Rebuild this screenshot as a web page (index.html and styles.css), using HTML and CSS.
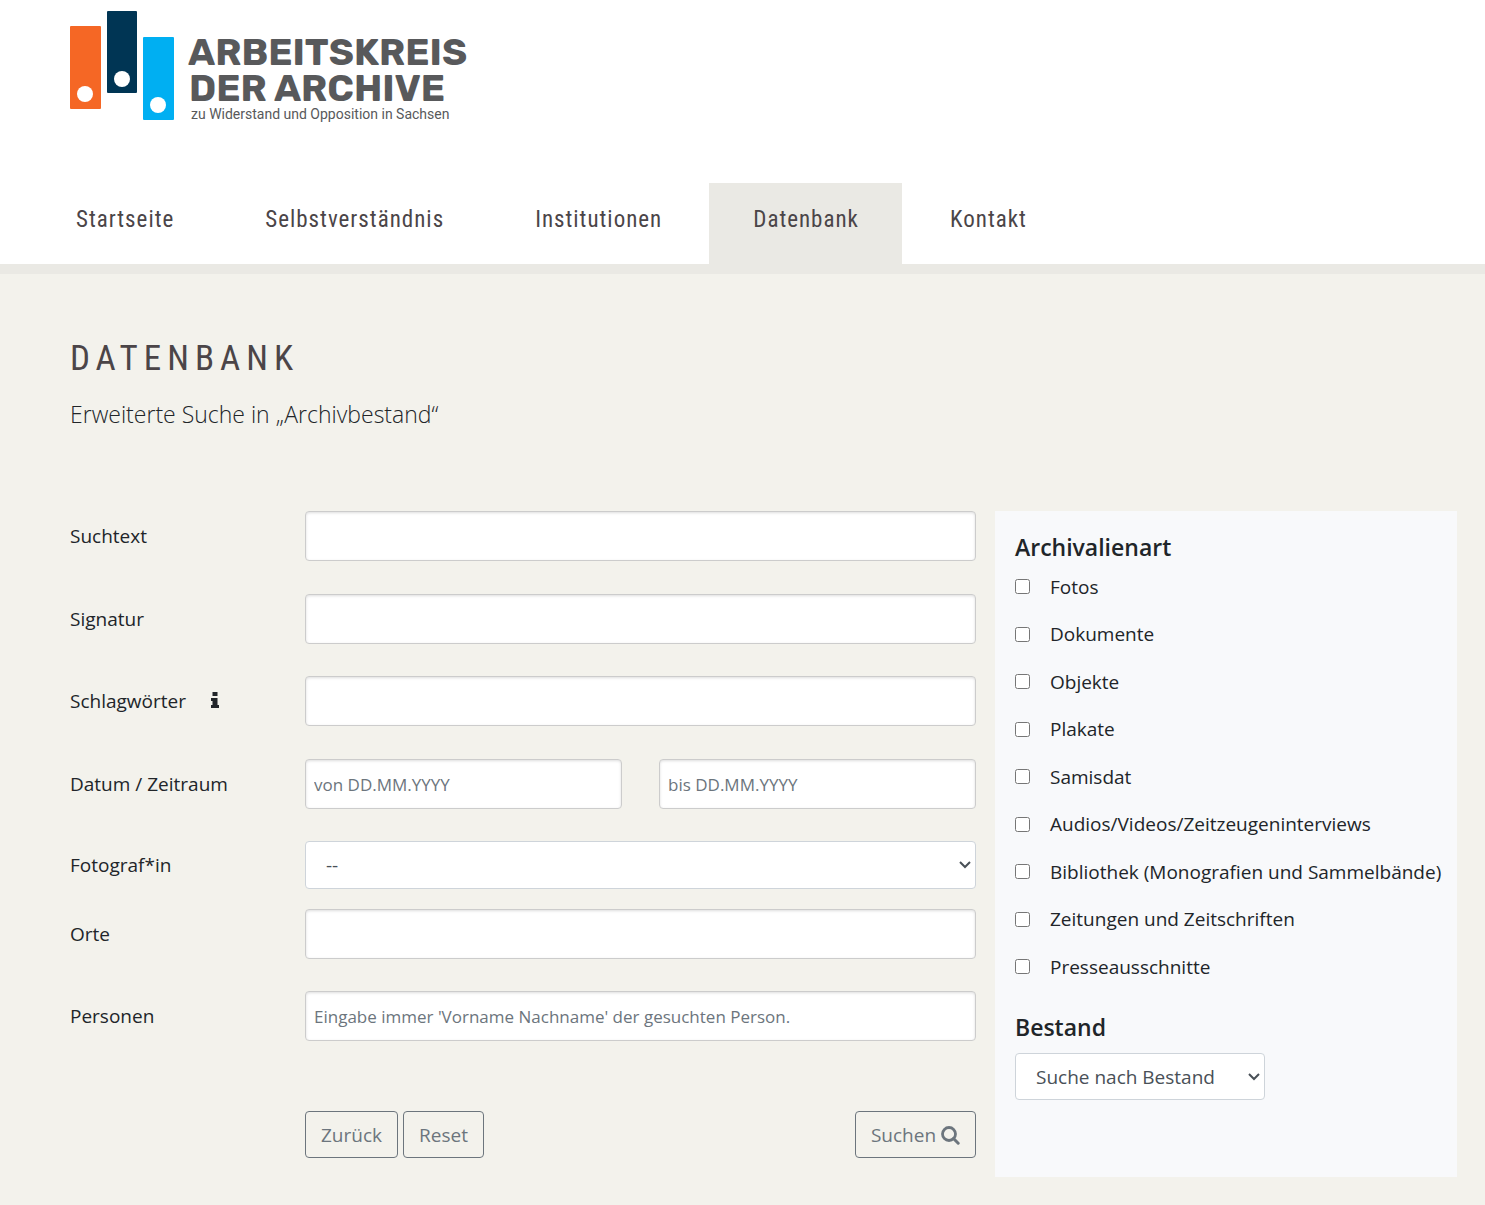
FILE: index.html
```html
<!DOCTYPE html>
<html lang="de">
<head>
<meta charset="utf-8">
<meta name="viewport" content="width=device-width, initial-scale=1">
<title>Datenbank – Arbeitskreis der Archive</title>
<link rel="stylesheet" href="styles.css">
</head>
<body>
<header class="site-header">
  <a class="logo" href="#">
    <svg width="404" height="116" viewBox="0 0 404 116" role="img" aria-label="Arbeitskreis der Archive">
      <rect x="0" y="16" width="31" height="83" rx="1" fill="#f56725"/>
      <circle cx="15" cy="84" r="8" fill="#fff"/>
      <rect x="37" y="1" width="30" height="82" rx="1" fill="#003554"/>
      <circle cx="52" cy="69" r="8" fill="#fff"/>
      <rect x="73" y="27" width="31" height="83" rx="1" fill="#00aff2"/>
      <circle cx="88" cy="95" r="8" fill="#fff"/>
      <text class="logo-name" x="118" y="55">ARBEITSKREIS</text>
      <text class="logo-name" x="119" y="91">DER ARCHIVE</text>
      <text class="logo-sub" x="121" y="109">zu Widerstand und Opposition in Sachsen</text>
    </svg>
  </a>
  <nav class="main-nav">
    <a href="#">Startseite</a>
    <a href="#">Selbstverständnis</a>
    <a href="#">Institutionen</a>
    <a href="#" class="active" aria-current="page">Datenbank</a>
    <a href="#">Kontakt</a>
  </nav>
</header>
<main class="content">
  <h1>DATENBANK</h1>
  <p class="lead">Erweiterte Suche in „Archivbestand“</p>
  <form class="search">
    <div class="fields">
      <div class="row"><label for="text">Suchtext</label><input class="control" type="text" id="text"></div>
      <div class="row"><label for="signatur">Signatur</label><input class="control" type="text" id="signatur"></div>
      <div class="row">
        <label for="tags">Schlagwörter
          <svg class="info" width="8" height="16" viewBox="0 0 8 16" aria-hidden="true"><path fill="currentColor" d="M1.500 0h5v4h-5zM0 6h6.500v7H8v3H0v-3h1.500V9H0z"/></svg>
        </label>
        <input class="control" type="text" id="tags">
      </div>
      <div class="row">
        <label for="from">Datum / Zeitraum</label>
        <div class="range">
          <input class="control" type="text" id="from" placeholder="von DD.MM.YYYY">
          <input class="control" type="text" aria-label="Datum bis" placeholder="bis DD.MM.YYYY">
        </div>
      </div>
      <div class="row compact"><label for="photographer">Fotograf*in</label><select class="select" id="photographer"><option>--</option></select></div>
      <div class="row"><label for="places">Orte</label><input class="control" type="text" id="places"></div>
      <div class="row"><label for="people">Personen</label><input class="control" type="text" id="people" placeholder="Eingabe immer 'Vorname Nachname' der gesuchten Person."></div>
      <div class="actions">
        <button class="btn" type="button">Zurück</button>
        <button class="btn" type="reset">Reset</button>
        <button class="btn submit" type="submit">Suchen
          <svg width="19" height="19" viewBox="0 0 19 19" aria-hidden="true"><circle cx="8" cy="8" r="6.500" fill="none" stroke="currentColor" stroke-width="2.800"/><path d="M12.500 12.500l4.700 4.700" stroke="currentColor" stroke-width="3" stroke-linecap="round"/></svg>
        </button>
      </div>
    </div>
    <aside class="filters">
      <h2>Archivalienart</h2>
      <ul class="types">
        <li><label><input type="checkbox">Fotos</label></li>
        <li><label><input type="checkbox">Dokumente</label></li>
        <li><label><input type="checkbox">Objekte</label></li>
        <li><label><input type="checkbox">Plakate</label></li>
        <li><label><input type="checkbox">Samisdat</label></li>
        <li><label><input type="checkbox">Audios/Videos/Zeitzeugeninterviews</label></li>
        <li><label><input type="checkbox">Bibliothek (Monografien und Sammelbände)</label></li>
        <li><label><input type="checkbox">Zeitungen und Zeitschriften</label></li>
        <li><label><input type="checkbox">Presseausschnitte</label></li>
      </ul>
      <h2><label for="holding">Bestand</label></h2>
      <select class="select holding" id="holding"><option>Suche nach Bestand</option></select>
    </aside>
  </form>
</main>
</body>
</html>
```
FILE: styles.css
```css
* { box-sizing: border-box; }
body {
  margin: 0;
  min-height: 100vh;
  background: #f3f2ec;
  color: #212529;
  font: 19px/28px "Segoe UI", "Open Sans", sans-serif;
}
.site-header {
  background: #fff;
  border-bottom: 10px solid #eae9e4;
  padding-top: 10px;
}
.logo { display: block; margin: 0 70px 57px; }
.logo svg { display: block; }
.logo-name { font: 700 38px "Rubik", "Roboto", sans-serif; fill: #58595b; }
.logo-sub { font: 400 14px "Roboto", sans-serif; fill: #58595b; }
.main-nav { display: flex; gap: 4px; padding: 0 32px; }
.main-nav a {
  padding: 21px 43px 28px 44px;
  font: 23px/32px "Roboto Condensed", "Liberation Sans Narrow", "Roboto", sans-serif;
  letter-spacing: 1px;
  color: #4b4548;
  text-decoration: none;
}
.main-nav a.active { background: #eae9e4; }
.content { padding: 65px 28px 28px 70px; }
h1 {
  margin: 0;
  font: 400 35px/40px "Roboto Condensed", "Liberation Sans Narrow", "Roboto", sans-serif;
  letter-spacing: 6px;
  color: #4b4548;
}
.lead { margin: 19px 0 81px; font: 300 23px/32px "Open Sans", sans-serif; }
.search {
  display: grid;
  grid-template-columns: minmax(0, 151fr) minmax(0, 77fr);
  gap: 19px;
}
.row {
  display: grid;
  grid-template-columns: 235px minmax(0, 1fr);
  align-items: center;
  margin-bottom: 33px;
}
.row:nth-child(even) { margin-bottom: 32px; }
.row.compact { margin-bottom: 20px; }
.info { margin-left: 20px; }
.control {
  width: 100%;
  height: 50px;
  padding: 1px 8px 0;
  border: 1px solid #ccc;
  border-radius: 4px;
  background: #fff;
  box-shadow: inset 0 1px 3px #ddd;
  font: inherit;
  font-size: 17px;
  color: #495057;
}
.control::placeholder { color: #6c757d; opacity: 1; }
.range { display: grid; grid-template-columns: 1fr 1fr; gap: 37px; }
.select {
  appearance: none;
  width: 100%;
  height: 48px;
  padding: 0 20px;
  border: 1px solid #ced4da;
  border-radius: 4px;
  background: #fff url("data:image/svg+xml,%3Csvg xmlns='http://www.w3.org/2000/svg' width='12' height='8'%3E%3Cpath d='M1 1l5 5 5-5' fill='none' stroke='%23495057' stroke-width='2'/%3E%3C/svg%3E") no-repeat right 4px center;
  font: inherit;
  color: #495057;
}
.actions { display: flex; gap: 5px; margin: 70px 0 0 235px; }
.btn {
  height: 47px;
  padding: 0 15px;
  border: 1px solid #6c757d;
  border-radius: 4px;
  background: transparent;
  font: inherit;
  color: #6c757d;
}
.btn svg { vertical-align: -3px; }
.submit { margin-left: auto; }
.filters { padding: 20px 20px 77px; background: #f8f9fb; }
h2 { margin: 0; font-size: 23px; line-height: 32px; font-weight: 600; }
.types { list-style: none; margin: 0 0 21px; padding: 0; }
.types li { display: flex; align-items: center; height: 47px; }
.types li:nth-child(even) { height: 48px; }
.types label { display: flex; align-items: center; gap: 20px; white-space: nowrap; }
.types input { width: 15px; height: 15px; margin: 0; flex: none; }
.holding { width: 250px; height: 47px; margin-top: 10px; }
```
